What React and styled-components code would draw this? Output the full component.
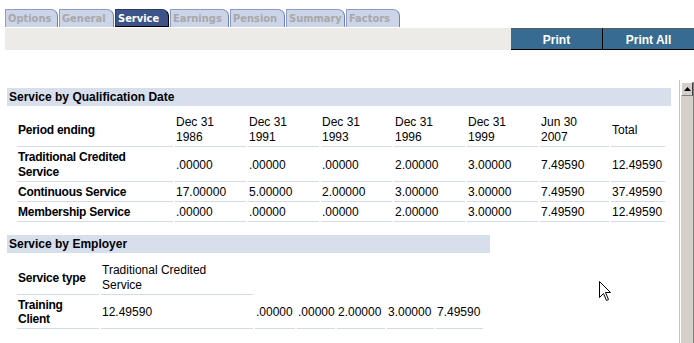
import React from "react";
import styled, { createGlobalStyle } from "styled-components";

const GlobalStyle = createGlobalStyle`
  html, body {
    margin: 0;
    padding: 0;
    background: #ffffff;
    font-family: "Liberation Sans", Arial, sans-serif;
    font-size: 12px;
    color: #000;
    overflow: hidden;
  }
`;

const Page = styled.div`
  width: 694px;
  height: 343px;
  display: flex;
  flex-direction: column;
`;

const TabBar = styled.div`
  display: flex;
  gap: 1px;
  padding: 9px 0 0 5px;
  margin-bottom: 1px;
`;

const Tab = styled.div`
  box-sizing: border-box;
  width: ${(p) => p.$w}px;
  height: 18px;
  padding: 1px 0 0 2px;
  font-family: "DejaVu Sans Condensed", "DejaVu Sans", sans-serif;
  font-weight: 700;
  font-size: 11px;
  line-height: 15px;
  border-top: 1px solid ${(p) => (p.$active ? "#2a3d66" : "#8b9bc8")};
  border-left: 1px solid ${(p) => (p.$active ? "#2a3d66" : "#8b9bc8")};
  border-right: 1px solid ${(p) => (p.$active ? "#000" : "#6f80b0")};
  border-bottom: ${(p) => (p.$active ? "1px solid #000" : "none")};
  border-top-right-radius: 7px;
  background: ${(p) => (p.$active ? "#3c5489" : "#ccd4e8")};
  color: ${(p) => (p.$active ? "#ffffff" : "#a8a8a8")};
  white-space: nowrap;
`;

const Toolbar = styled.div`
  margin-left: 5px;
  height: 22px;
  background: #ecebe7;
  display: flex;
  justify-content: flex-end;
`;

const PrintButton = styled.div`
  box-sizing: border-box;
  width: ${(p) => p.$w}px;
  height: 22px;
  background: #386b92;
  border-top: 1px solid #5c5c5c;
  border-bottom: 1px solid #000;
  border-left: ${(p) => (p.$sep ? "1px solid #000" : "none")};
  color: #fff;
  font-weight: 700;
  font-size: 12px;
  line-height: 21px;
  padding-top: 1px;
  text-align: center;
`;

const Frame = styled.div`
  margin-top: 30px;
  flex: 1;
  display: flex;
  min-height: 0;
`;

const Content = styled.div`
  position: relative;
  flex: 1;
  padding: 8px 0 0 7px;
`;

const SectionHeader = styled.div`
  width: ${(p) => p.$w}px;
  height: 18px;
  line-height: 18px;
  padding-left: 2px;
  box-sizing: border-box;
  background: #d7deec;
  font-weight: 700;
  font-size: 12px;
  margin-top: ${(p) => p.$mt || 0}px;
`;

const Table = styled.table`
  border-collapse: separate;
  border-spacing: 2px;
  margin: ${(p) => p.$mt}px 0 0 8px;
  table-layout: fixed;
`;

const Cell = styled.td`
  box-sizing: border-box;
  padding: ${(p) => (p.$pad ? p.$pad : "1px 1px")};
  line-height: ${(p) => p.$lh || 15}px;
  vertical-align: middle;
  font-weight: ${(p) => (p.$bold ? 700 : 400)};
  letter-spacing: ${(p) => (p.$bold ? "-0.25px" : "0")};
  border-bottom: ${(p) => (p.$plain ? "1px solid transparent" : "1px solid #d3dae8")};
  white-space: nowrap;
`;

const Wrap = styled.span`
  display: block;
  white-space: normal;
  max-width: ${(p) => p.$max}px;
`;

const Scrollbar = styled.div`
  width: 15px;
  box-sizing: border-box;
  border-left: 1px solid #c4c4c4;
  padding: 2px 0 0 1px;
  background: #fff;
  display: flex;
`;

const Track = styled.div`
  flex: 1;
  background: #d4d0c8;
  border-right: 1px solid #808080;
  display: flex;
  flex-direction: column;
`;

const UpButton = styled.div`
  height: 14px;
  box-sizing: border-box;
  border-top: 1px solid #fff;
  border-left: 1px solid #fff;
  border-bottom: 1px solid #808080;
  border-right: 1px solid #404040;
  display: flex;
  align-items: center;
  justify-content: center;
`;

const Pointer = styled.svg`
  position: absolute;
  left: 599px;
  top: 201px;
`;

const TABS = [
  { label: "Options", w: 53 },
  { label: "General", w: 55 },
  { label: "Service", w: 54, active: true },
  { label: "Earnings", w: 59 },
  { label: "Pension", w: 55 },
  { label: "Summary", w: 59 },
  { label: "Factors", w: 54 },
];

const COLS = [
  { l1: "Dec 31", l2: "1986", w: 71 },
  { l1: "Dec 31", l2: "1991", w: 71 },
  { l1: "Dec 31", l2: "1993", w: 71 },
  { l1: "Dec 31", l2: "1996", w: 71 },
  { l1: "Dec 31", l2: "1999", w: 71 },
  { l1: "Jun 30", l2: "2007", w: 69 },
];

const ROWS = [
  {
    label: "Traditional Credited Service",
    values: [".00000", ".00000", ".00000", "2.00000", "3.00000", "7.49590"],
    total: "12.49590",
  },
  {
    label: "Continuous Service",
    values: ["17.00000", "5.00000", "2.00000", "3.00000", "3.00000", "7.49590"],
    total: "37.49590",
  },
  {
    label: "Membership Service",
    values: [".00000", ".00000", ".00000", "2.00000", "3.00000", "7.49590"],
    total: "12.49590",
  },
];

const EMPLOYER_VALUES = [
  { v: ".00000", w: 40 },
  { v: ".00000", w: 38 },
  { v: "2.00000", w: 48 },
  { v: "3.00000", w: 47 },
  { v: "7.49590", w: 47 },
];

const App = () => {
  return (
    <Page>
      <GlobalStyle />
      <TabBar>
        {TABS.map((t) => (
          <Tab key={t.label} $w={t.w} $active={t.active}>
            {t.label}
          </Tab>
        ))}
      </TabBar>
      <Toolbar>
        <PrintButton $w={91}>Print</PrintButton>
        <PrintButton $w={92} $sep>
          Print All
        </PrintButton>
      </Toolbar>

      <Frame>
        <Content>
          <SectionHeader $w={664}>Service by Qualification Date</SectionHeader>
          <Table $mt={6}>
            <colgroup>
              <col style={{ width: 156 }} />
              {COLS.map((c, i) => (
                <col key={i} style={{ width: c.w }} />
              ))}
              <col style={{ width: 54 }} />
            </colgroup>
            <tbody>
              <tr>
                <Cell $bold>Period ending</Cell>
                {COLS.map((c, i) => (
                  <Cell key={i}>
                    {c.l1}
                    <br />
                    {c.l2}
                  </Cell>
                ))}
                <Cell>Total</Cell>
              </tr>
              {ROWS.map((r) => (
                <tr key={r.label}>
                  <Cell $bold>
                    <Wrap $max={140}>{r.label}</Wrap>
                  </Cell>
                  {r.values.map((v, i) => (
                    <Cell key={i}>{v}</Cell>
                  ))}
                  <Cell>{r.total}</Cell>
                </tr>
              ))}
            </tbody>
          </Table>

          <SectionHeader $w={483} $mt={11}>
            Service by Employer
          </SectionHeader>
          <Table $mt={7}>
            <colgroup>
              <col style={{ width: 82 }} />
              <col style={{ width: 152 }} />
              {EMPLOYER_VALUES.map((e, i) => (
                <col key={i} style={{ width: e.w }} />
              ))}
            </colgroup>
            <tbody>
              <tr>
                <Cell $bold>Service type</Cell>
                <Cell>
                  <Wrap $max={125}>Traditional Credited Service</Wrap>
                </Cell>
                <Cell $plain colSpan={5} />
              </tr>
              <tr>
                <Cell $bold $lh={14} $pad="1px 1px 2px">
                  <Wrap $max={60}>Training Client</Wrap>
                </Cell>
                <Cell>12.49590</Cell>
                {EMPLOYER_VALUES.map((e, i) => (
                  <Cell key={i} $pad="1px 0 1px 1px">
                    {e.v}
                  </Cell>
                ))}
              </tr>
            </tbody>
          </Table>

          <Pointer width="13" height="21" viewBox="0 0 13 21">
            <path
              d="M0.5 0.5 L0.5 16.5 L4.5 12.5 L7.5 19.5 L9.5 18.5 L6.5 11.5 L11.5 11.5 Z"
              fill="#fff"
              stroke="#000"
              strokeWidth="1"
            />
          </Pointer>
        </Content>
        <Scrollbar>
          <Track>
            <UpButton>
              <svg width="7" height="4" viewBox="0 0 7 4">
                <path d="M3.5 0 L7 4 L0 4 Z" fill="#000" />
              </svg>
            </UpButton>
          </Track>
        </Scrollbar>
      </Frame>
    </Page>
  );
};

export default App;
